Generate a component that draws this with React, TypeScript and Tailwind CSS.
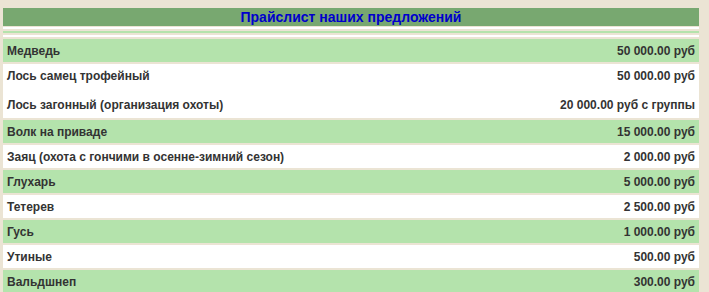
const rows: { name: string; price: string; green: boolean }[] = [
  { name: 'Волк на приваде', price: '15 000.00 руб', green: true },
  { name: 'Заяц (охота с гончими в осенне-зимний сезон)', price: '2 000.00 руб', green: false },
  { name: 'Глухарь', price: '5 000.00 руб', green: true },
  { name: 'Тетерев', price: '2 500.00 руб', green: false },
  { name: 'Гусь', price: '1 000.00 руб', green: true },
  { name: 'Утиные', price: '500.00 руб', green: false },
  { name: 'Вальдшнеп', price: '300.00 руб', green: true },
];

export default function App() {
  return (
    <div
      className="w-[709px] h-[292px] overflow-hidden bg-[#ebe4d4] pt-[8px] pl-[3px] pr-[10px]"
      style={{ fontFamily: '"Liberation Sans", Arial, sans-serif' }}
    >
      <div className="flex flex-col w-[696px]">
        {/* header */}
        <div className="h-[18px] bg-[#78a870] flex items-center justify-center">
          <span className="text-[14px] font-bold text-[#0000cc] leading-none">Прайслист наших предложений</span>
        </div>
        <div className="h-[1px]" />
        <div className="h-[2px] bg-white" />
        <div className="h-[2px]" />
        <div className="h-[2px] bg-[#b4e3ac]" />
        <div className="h-[2px]" />
        <div className="h-[2px] bg-white" />
        <div className="h-[2px]" />

        <div className="flex flex-col gap-[2px] text-[12px] font-bold text-[#333333]">
          <Row name="Медведь" price="50 000.00 руб" green />
          <div className="bg-white flex flex-col">
            <div className="h-[23px] flex items-center justify-between px-[4px]">
              <span>Лось самец трофейный</span>
              <span>50 000.00 руб</span>
            </div>
            <div className="h-[31px] flex items-end justify-between px-[4px] pb-[4px]">
              <span>Лось загонный (организация охоты)</span>
              <span>20 000.00 руб с группы</span>
            </div>
          </div>
          {rows.map((r) => (
            <Row key={r.name} name={r.name} price={r.price} green={r.green} />
          ))}
        </div>
      </div>
    </div>
  );
}

function Row({ name, price, green }: { name: string; price: string; green?: boolean }) {
  return (
    <div className={`h-[23px] flex items-center justify-between px-[4px] ${green ? 'bg-[#b4e3ac]' : 'bg-white'}`}>
      <span>{name}</span>
      <span>{price}</span>
    </div>
  );
}
